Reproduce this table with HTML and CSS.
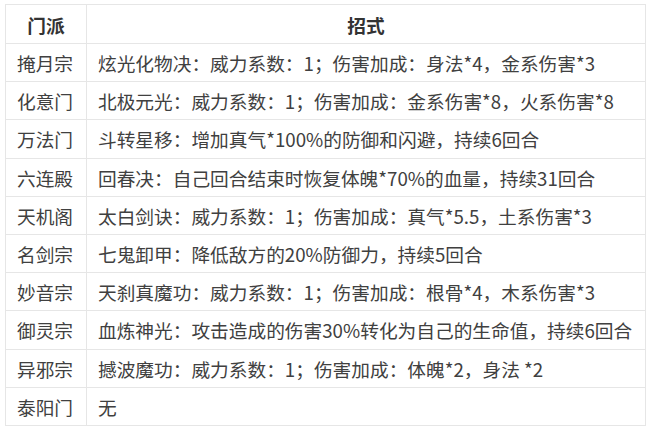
FILE: index.html
```html
<!DOCTYPE html>
<html lang="zh">
<head>
<meta charset="utf-8">
<link rel="stylesheet" href="styles.css">
</head>
<body>
<table class="skills">
  <thead>
    <tr><th class="sect">门派</th><th>招式</th></tr>
  </thead>
  <tbody>
    <tr><td class="sect">掩月宗</td><td>炫光化物决：威力系数：1；伤害加成：身法*4，金系伤害*3</td></tr>
    <tr><td class="sect">化意门</td><td>北极元光：威力系数：1；伤害加成：金系伤害*8，火系伤害*8</td></tr>
    <tr><td class="sect">万法门</td><td>斗转星移：增加真气*100%的防御和闪避，持续6回合</td></tr>
    <tr><td class="sect">六连殿</td><td>回春决：自己回合结束时恢复体魄*70%的血量，持续31回合</td></tr>
    <tr><td class="sect">天机阁</td><td>太白剑诀：威力系数：1；伤害加成：真气*5.5，土系伤害*3</td></tr>
    <tr><td class="sect">名剑宗</td><td>七鬼卸甲：降低敌方的20%防御力，持续5回合</td></tr>
    <tr><td class="sect">妙音宗</td><td>天刹真魔功：威力系数：1；伤害加成：根骨*4，木系伤害*3</td></tr>
    <tr><td class="sect">御灵宗</td><td>血炼神光：攻击造成的伤害30%转化为自己的生命值，持续6回合</td></tr>
    <tr><td class="sect">异邪宗</td><td>撼波魔功：威力系数：1；伤害加成：体魄*2，身法 *2</td></tr>
    <tr><td class="sect">泰阳门</td><td>无</td></tr>
  </tbody>
</table>
</body>
</html>
```

FILE: styles.css
```css
html, body {
  margin: 0;
  padding: 0;
  background: #ffffff;
}
body {
  padding: 4px 0 0 5px;
  font-family: "Noto Sans CJK SC", "Noto Sans", sans-serif;
  color: #404040;
}
.skills {
  border-collapse: collapse;
  width: 641px;
  table-layout: fixed;
  font-size: 18.7px;
}
.skills th,
.skills td {
  border: 1px solid #e6e6e6;
  height: 37.2px;
  padding: 0 11px;
  line-height: 37px;
  white-space: nowrap;
  text-align: left;
}
.skills th {
  height: 38px;
  font-weight: bold;
  text-align: center;
  color: #333333;
}
.skills .sect {
  width: 58px;
}
```
